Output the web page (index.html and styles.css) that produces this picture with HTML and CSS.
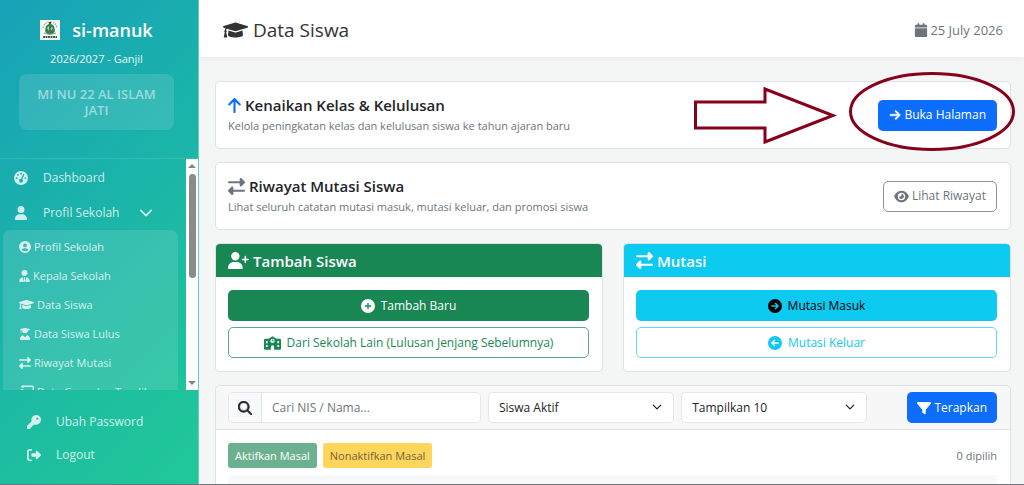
FILE: index.html
```html
<!DOCTYPE html>
<html lang="id">
<head>
<meta charset="utf-8">
<meta name="viewport" content="width=device-width, initial-scale=1">
<title>Data Siswa - si-manuk</title>
<link rel="stylesheet" href="styles.css">
</head>
<body>
<svg class="sprite" aria-hidden="true">
  <symbol id="cap" viewBox="0 0 640 512"><path d="M622.34 153.2L343.4 67.5c-15.2-4.67-31.6-4.67-46.79 0L17.66 153.2c-23.54 7.23-23.54 38.36 0 45.59l48.63 14.94c-10.67 13.19-17.23 29.28-17.88 46.9C38.78 266.15 32 276.11 32 288c0 10.78 5.68 19.85 13.86 25.65L20.33 428.53C18.11 438.52 25.71 448 35.94 448h56.11c10.24 0 17.84-9.48 15.62-19.47L82.14 313.65C90.32 307.85 96 298.78 96 288c0-11.57-6.47-21.25-15.66-26.87.76-15.02 8.44-28.3 20.69-36.72L296.6 284.5c9.06 2.78 26.44 6.25 46.79 0l278.95-85.7c23.55-7.24 23.55-38.36 0-45.6zM352.79 315.09c-28.53 8.76-52.84 3.92-65.59 0l-145.02-44.55L128 384c0 35.35 85.96 64 192 64s192-28.65 192-64l-14.18-113.47-145.03 44.56z"/></symbol>
  <symbol id="user" viewBox="0 0 448 512"><path d="M224 256A128 128 0 1 0 224 0a128 128 0 1 0 0 256zm-45.7 48C79.8 304 0 383.8 0 482.3C0 498.7 13.3 512 29.7 512H418.3c16.4 0 29.7-13.3 29.7-29.7C448 383.8 368.2 304 269.7 304H178.3z"/></symbol>
  <symbol id="tie" viewBox="0 0 448 512"><path d="M224 256A128 128 0 1 0 224 0a128 128 0 1 0 0 256zM144 309C62 324 0 396 0 482.300C0 498.700 13.300 512 29.700 512H190L144 309zM304 309L258 512H418.300c16.400 0 29.700-13.300 29.700-29.700C448 396 386 324 304 309zM188 300h72l-18 50 24 100-42 62-42-62 24-100z"/></symbol>
  <symbol id="grad" viewBox="0 0 448 512"><path d="M224 0L20 42v36l24 9v62l-20 54h56l-18-54V94l42 10v40a128 128 0 0 0 240 0v-40l84-22V42zM136 304C60 318 0 392 0 482c0 17 13 30 30 30h388c17 0 30-13 30-30 0-90-60-164-136-178l-88 92z"/></symbol>
  <symbol id="userplus" viewBox="0 0 640 512"><path d="M96 128a128 128 0 1 1 256 0A128 128 0 1 1 96 128zM0 482.3C0 383.8 79.8 304 178.3 304h91.4C368.2 304 448 383.8 448 482.3c0 16.4-13.3 29.7-29.7 29.7H29.7C13.3 512 0 498.7 0 482.3zM504 312V248H440c-13.3 0-24-10.7-24-24s10.7-24 24-24h64V136c0-13.3 10.7-24 24-24s24 10.7 24 24v64h64c13.3 0 24 10.7 24 24s-10.7 24-24 24H552v64c0 13.3-10.7 24-24 24s-24-10.7-24-24z"/></symbol>
  <symbol id="key" viewBox="0 0 512 512"><path d="M336 352c97.2 0 176-78.8 176-176S433.2 0 336 0S160 78.8 160 176c0 18.7 2.9 36.8 8.300 53.700L7 391c-4.500 4.500-7 10.600-7 17v80c0 13.300 10.700 24 24 24h80c13.300 0 24-10.700 24-24V448h40c13.300 0 24-10.700 24-24V384h40c6.400 0 12.500-2.500 17-7l33.300-33.300c16.900 5.400 35 8.300 53.700 8.300zM376 96a40 40 0 1 1 0 80 40 40 0 1 1 0-80z"/></symbol>
  <symbol id="filter" viewBox="0 0 512 512"><path d="M3.9 54.9C10.5 40.9 24.5 32 40 32H472c15.500 0 29.500 8.900 36.100 22.900s4.600 30.500-5.200 42.500L320 320.900V448c0 12.100-6.800 23.200-17.700 28.600s-23.800 4.300-33.500-3l-64-48c-8.100-6-12.800-15.500-12.800-25.600V320.900L9 97.300C-.7 85.400-2.800 68.800 3.900 54.900z"/></symbol>
  <symbol id="search" viewBox="0 0 512 512"><path stroke="currentColor" stroke-width="16" d="M416 208c0 45.9-14.9 88.3-40 122.7L502.6 457.4c12.5 12.5 12.5 32.8 0 45.3s-32.8 12.5-45.3 0L330.7 376c-34.4 25.2-76.8 40-122.7 40C93.1 416 0 322.9 0 208S93.1 0 208 0S416 93.1 416 208zM208 352a144 144 0 1 0 0-288 144 144 0 1 0 0 288z"/></symbol>
  <symbol id="right" viewBox="0 0 448 512"><path stroke="currentColor" stroke-width="20" d="M438.6 278.6c12.5-12.5 12.5-32.8 0-45.3l-160-160c-12.5-12.5-32.8-12.5-45.3 0s-12.5 32.8 0 45.3L338.8 224 32 224c-17.7 0-32 14.3-32 32s14.3 32 32 32l306.7 0L233.4 393.4c-12.5 12.5-12.5 32.8 0 45.3s32.8 12.5 45.3 0l160-160z"/></symbol>
  <symbol id="up" viewBox="0 0 384 512"><path d="M214.6 41.4c-12.5-12.5-32.8-12.5-45.3 0l-160 160c-12.5 12.5-12.5 32.8 0 45.3s32.8 12.5 45.3 0L160 141.2V448c0 17.7 14.3 32 32 32s32-14.3 32-32V141.2L329.4 246.6c12.5 12.5 32.8 12.5 45.3 0s12.5-32.8 0-45.3l-160-160z"/></symbol>
  <symbol id="swap" viewBox="0 0 512 512"><path d="M32 96l320 0V32c0-12.9 7.8-24.6 19.8-29.6s25.7-2.2 34.9 6.900l96 96c6 6 9.400 14.100 9.400 22.600s-3.400 16.600-9.400 22.600l-96 96c-9.200 9.200-22.900 11.900-34.900 6.900s-19.800-16.600-19.800-29.600V160L32 160c-17.700 0-32-14.300-32-32s14.300-32 32-32zM480 352c17.700 0 32 14.300 32 32s-14.300 32-32 32H160v64c0 12.900-7.800 24.600-19.800 29.600s-25.700 2.200-34.900-6.900l-96-96c-6-6-9.400-14.100-9.400-22.600s3.400-16.600 9.400-22.600l96-96c9.200-9.200 22.900-11.900 34.900-6.900s19.800 16.600 19.800 29.600l0 64H480z"/></symbol>
  <symbol id="eye" viewBox="0 0 576 512"><path d="M288 32c-80.8 0-145.5 36.8-192.6 80.6C48.6 156 17.3 208 2.5 243.7c-3.3 7.9-3.3 16.7 0 24.6C17.3 304 48.6 356 95.4 399.4C142.5 443.2 207.2 480 288 480s145.5-36.8 192.6-80.6c46.8-43.5 78.1-95.4 93-131.1c3.3-7.9 3.3-16.7 0-24.6c-14.9-35.7-46.2-87.7-93-131.1C433.5 68.8 368.8 32 288 32zM144 256a144 144 0 1 1 288 0 144 144 0 1 1 -288 0zm144-64c0 35.3-28.7 64-64 64c-7.1 0-13.9-1.2-20.3-3.3c-5.5-1.8-11.9 1.6-11.7 7.4c.3 6.9 1.3 13.8 3.2 20.7c13.7 51.2 66.4 81.6 117.6 67.9s81.6-66.4 67.9-117.6c-11.1-41.5-47.8-69.4-88.6-71.1c-5.8-.2-9.2 6.1-7.4 11.7c2.1 6.4 3.3 13.2 3.3 20.3z"/></symbol>
  <symbol id="out" viewBox="0 0 512 512"><path d="M377.9 105.9L500.7 228.7c7.2 7.2 11.3 17.1 11.3 27.3s-4.1 20.1-11.3 27.3L377.9 406.1c-6.4 6.4-15 9.9-24 9.9c-18.7 0-33.9-15.2-33.9-33.9l0-62.1-128 0c-17.7 0-32-14.3-32-32l0-64c0-17.7 14.3-32 32-32l128 0 0-62.1c0-18.7 15.2-33.9 33.9-33.9c9 0 17.6 3.6 24 9.9zM160 96L96 96c-17.7 0-32 14.3-32 32l0 256c0 17.7 14.3 32 32 32l64 0c17.7 0 32 14.3 32 32s-14.3 32-32 32l-64 0c-53 0-96-43-96-96L0 128C0 75 43 32 96 32l64 0c17.7 0 32 14.3 32 32s-14.3 32-32 32z"/></symbol>
  <symbol id="calendar" viewBox="0 0 448 512"><path d="M96 32V64H48C21.5 64 0 85.5 0 112v48H448V112c0-26.5-21.5-48-48-48H352V32c0-17.7-14.3-32-32-32s-32 14.3-32 32V64H160V32c0-17.7-14.3-32-32-32S96 14.3 96 32zM448 192H0V464c0 26.5 21.5 48 48 48H400c26.5 0 48-21.5 48-48V192z"/></symbol>
  <symbol id="plus" viewBox="0 0 512 512"><path fill-rule="evenodd" d="M256 0a256 256 0 1 0 0 512 256 256 0 1 0 0-512zM232 144h48v88h88v48h-88v88h-48v-88h-88v-48h88z"/></symbol>
  <symbol id="cright" viewBox="0 0 512 512"><path fill-rule="evenodd" d="M256 0a256 256 0 1 0 0 512 256 256 0 1 0 0-512zM280 130L406 256 280 382l-38-38 60-60H120v-56h182l-60-60z"/></symbol>
  <symbol id="cleft" viewBox="0 0 512 512"><path fill-rule="evenodd" d="M256 0a256 256 0 1 0 0 512 256 256 0 1 0 0-512zM232 130L106 256l126 126 38-38-60-60h182v-56H210l60-60z"/></symbol>
  <symbol id="cuser" viewBox="0 0 512 512"><path fill-rule="evenodd" d="M256 0a256 256 0 1 0 0 512 256 256 0 1 0 0-512zM256 105a82 82 0 1 1 0 164 82 82 0 1 1 0-164zM218 305h76c50 0 88 32 98 76a184 184 0 0 1-272 0c10-44 48-76 98-76z"/></symbol>
  <symbol id="gauge" viewBox="0 0 512 512"><path fill-rule="evenodd" d="M256 0a256 256 0 1 0 0 512 256 256 0 1 0 0-512zM256 64a32 32 0 1 1 0 64 32 32 0 1 1 0-64zM144 112a32 32 0 1 1 0 64 32 32 0 1 1 0-64zM96 224a32 32 0 1 1 0 64 32 32 0 1 1 0-64zM416 224a32 32 0 1 1 0 64 32 32 0 1 1 0-64zM340 106l42 20-80 180a66 66 0 1 1-44-18z"/></symbol>
  <symbol id="school" viewBox="0 0 640 512"><path fill-rule="evenodd" d="M320 0L474 96H592q48 0 48 48V464q0 48-48 48H380V400q0-60-60-60t-60 60V512H48q-48 0-48-48V144q0-48 48-48H166zM320 96a80 80 0 1 0 0 160 80 80 0 1 0 0-160zM304 120h32v40h28v30h-60zM72 184h64v80H72zM504 184h64v80h-64zM72 328h64v80H72zM504 328h64v80h-64z"/></symbol>
  <symbol id="board" viewBox="0 0 640 512"><path d="M128 0h448q64 0 64 64v288q0 64-64 64H400v-64h176V64H192v40q-36-30-96-20V64Q96 0 128 0zM128 144a80 80 0 1 1 0 160 80 80 0 1 1 0-160zM0 512q0-160 128-160t128 160z"/></symbol>
  <symbol id="down" viewBox="0 0 16 16"><path d="M2 5l6 6 6-6" fill="none" stroke="currentColor" stroke-width="2" stroke-linecap="round" stroke-linejoin="round"/></symbol>
</svg>

<div class="app">
  <aside class="sidebar">
    <header class="brand">
      <div class="brand-row">
        <svg class="logo" viewBox="0 0 20 20" role="img" aria-label="Logo">
          <rect width="20" height="20" fill="#f6f8f5"/>
          <path d="M3 8Q4 2.500 10 2Q16 2.500 17 8" fill="none" stroke="#9fb5a5" stroke-width="1.500" stroke-dasharray="1.500 1"/>
          <path d="M6 6l4-3 4 3 1 5-2 3H7l-2-3z" fill="#3d7d4c"/>
          <path d="M7 8l2-2v5zM11 7l2 1-2 3z" fill="#b9d2bd"/>
          <path d="M9 2h2v2H9z" fill="#245c34"/>
          <path d="M4 13q6 3 12 0" fill="none" stroke="#7fa287"/>
          <path d="M3 17h14" stroke="#40684b" stroke-width="2" stroke-dasharray="2 .5"/>
        </svg>
        <span class="brand-name">si-manuk</span>
      </div>
      <div class="term">2026/2027 - Ganjil</div>
      <div class="school-name">MI NU 22 AL ISLAM JATI</div>
    </header>
    <div class="menu-wrap">
      <nav class="menu">
        <a class="menu-link" href="#"><svg class="icon i14"><use href="#gauge"/></svg><span>Dashboard</span></a>
        <a class="menu-link" href="#"><svg class="icon i14"><use href="#user"/></svg><span>Profil Sekolah</span><svg class="icon chev"><use href="#down"/></svg></a>
        <div class="submenu">
          <a class="sub-link" href="#"><svg class="icon i12"><use href="#cuser"/></svg>Profil Sekolah</a>
          <a class="sub-link" href="#"><svg class="icon w11"><use href="#tie"/></svg>Kepala Sekolah</a>
          <a class="sub-link" href="#"><svg class="icon w15"><use href="#cap"/></svg>Data Siswa</a>
          <a class="sub-link" href="#"><svg class="icon i12"><use href="#grad"/></svg>Data Siswa Lulus</a>
          <a class="sub-link" href="#"><svg class="icon i12"><use href="#swap"/></svg>Riwayat Mutasi</a>
          <a class="sub-link" href="#"><svg class="icon w15"><use href="#board"/></svg>Data Guru dan Tendik</a>
        </div>
      </nav>
      <div class="scrollbar" aria-hidden="true">
        <svg class="tick" viewBox="0 0 8 4"><path d="M0 4l4-4 4 4z"/></svg>
        <div class="track"><div class="thumb"></div></div>
        <svg class="tick" viewBox="0 0 8 4"><path d="M0 0l4 4 4-4z"/></svg>
      </div>
    </div>
    <nav class="account">
      <a class="account-link" href="#"><svg class="icon i14"><use href="#key"/></svg>Ubah Password</a>
      <a class="account-link" href="#"><svg class="icon i14"><use href="#out"/></svg>Logout</a>
    </nav>
  </aside>

  <div class="page">
    <header class="topbar">
      <h1 class="title"><svg class="icon w25"><use href="#cap"/></svg>Data Siswa</h1>
      <div class="date"><svg class="icon i14"><use href="#calendar"/></svg>25 July 2026</div>
    </header>
    <main class="content">
      <section class="card banner">
        <div>
          <h2 class="heading"><svg class="icon up"><use href="#up"/></svg>Kenaikan Kelas &amp; Kelulusan</h2>
          <p class="note">Kelola peningkatan kelas dan kelulusan siswa ke tahun ajaran baru</p>
        </div>
        <button class="btn primary" type="button"><svg class="icon i12"><use href="#right"/></svg>Buka Halaman</button>
        <svg class="marker" viewBox="0 0 330 84" aria-hidden="true">
          <path d="M5.500 32H75V19L143 45.500 75 72V58H5.500z"/>
          <ellipse cx="242" cy="41.500" rx="81.500" ry="38"/>
        </svg>
      </section>
      <section class="card banner">
        <div>
          <h2 class="heading"><svg class="icon i16 muted"><use href="#swap"/></svg>Riwayat Mutasi Siswa</h2>
          <p class="note">Lihat seluruh catatan mutasi masuk, mutasi keluar, dan promosi siswa</p>
        </div>
        <button class="btn outline-gray" type="button"><svg class="icon w15"><use href="#eye"/></svg>Lihat Riwayat</button>
      </section>
      <div class="pair">
        <section class="card">
          <h2 class="card-head green"><svg class="icon w21"><use href="#userplus"/></svg>Tambah Siswa</h2>
          <div class="stack">
            <button class="btn wide green" type="button"><svg class="icon i14"><use href="#plus"/></svg>Tambah Baru</button>
            <button class="btn wide outline-green" type="button"><svg class="icon w17"><use href="#school"/></svg>Dari Sekolah Lain (Lulusan Jenjang Sebelumnya)</button>
          </div>
        </section>
        <section class="card">
          <h2 class="card-head cyan"><svg class="icon i16"><use href="#swap"/></svg>Mutasi</h2>
          <div class="stack">
            <button class="btn wide cyan dark" type="button"><svg class="icon i14"><use href="#cright"/></svg>Mutasi Masuk</button>
            <button class="btn wide outline-cyan" type="button"><svg class="icon i14"><use href="#cleft"/></svg>Mutasi Keluar</button>
          </div>
        </section>
      </div>
      <section class="card list">
        <form class="filters">
          <div class="search">
            <label class="search-icon" for="q" aria-label="Cari"><svg class="icon i14"><use href="#search"/></svg></label>
            <input class="search-input" id="q" type="text" placeholder="Cari NIS / Nama...">
          </div>
          <div class="picker"><select class="select" aria-label="Status"><option>Siswa Aktif</option></select><svg class="icon caret"><use href="#down"/></svg></div>
          <div class="picker"><select class="select" aria-label="Jumlah"><option>Tampilkan 10</option></select><svg class="icon caret"><use href="#down"/></svg></div>
          <button class="btn primary apply" type="button"><svg class="icon i14"><use href="#filter"/></svg>Terapkan</button>
        </form>
        <div class="bulk">
          <button class="btn-sm soft-green" type="button">Aktifkan Masal</button>
          <button class="btn-sm soft-yellow" type="button">Nonaktifkan Masal</button>
          <span class="count">0 dipilih</span>
        </div>
        <div class="table-head"></div>
      </section>
    </main>
  </div>
</div>
</body>
</html>
```
FILE: styles.css
```css
* { box-sizing: border-box; }
body {
  margin: 0;
  background: #f4f6f6;
  color: #212529;
  font: 12px/20px "Open Sans", "Noto Sans", sans-serif;
}
h1, h2, p { margin: 0; }
a { color: inherit; text-decoration: none; }
button, input, select { font: inherit; color: inherit; margin: 0; }
.sprite { position: absolute; width: 0; height: 0; }
.icon { fill: currentColor; flex: none; width: 14px; height: 14px; }
.i12 { width: 12px; height: 12px; }
.i14 { width: 14px; height: 14px; }
.i16 { width: 17px; height: 17px; }
.w11 { width: 11px; height: 12px; }
.w15 { width: 15px; height: 13px; }
.w17 { width: 17px; height: 14px; }
.w21 { width: 21px; height: 17px; }
.w25 { width: 25px; height: 20px; }
.up { width: 13px; height: 17px; color: #0d6efd; }
.muted { color: #6c757d; }

.app { display: flex; height: 100vh; overflow: hidden; border-bottom: 1px solid #6b7780; }
.sidebar {
  display: flex;
  flex-direction: column;
  flex: none;
  width: 199px;
  border-right: 1px solid #63cfc0;
  background: linear-gradient(135deg, #17a2b8, #20c997);
  color: rgba(255, 255, 255, .8);
}
.brand {
  flex: none;
  height: 159px;
  padding: 16px 24px 0 19px;
  border-bottom: 1px solid rgba(255, 255, 255, .12);
  text-align: center;
}
.brand-row { display: flex; align-items: center; justify-content: center; gap: 12px; height: 27px; }
.logo { width: 20px; height: 20px; }
.brand-name { color: #fff; font-size: 18px; font-weight: 600; }
.term { margin-top: 6px; color: #e8f7f6; font-size: 11px; }
.school-name {
  margin-top: 5px;
  padding: 12px 16px;
  border-radius: 8px;
  background: rgba(255, 255, 255, .12);
  color: rgba(255, 255, 255, .5);
  font-size: 13px;
  font-weight: 600;
  line-height: 16px;
}
.menu-wrap { display: flex; flex: 1; min-height: 0; }
.menu { flex: 1; min-width: 0; padding-top: 1px; overflow: hidden; }
.menu-link { display: flex; align-items: center; height: 35px; padding-left: 14px; gap: 15px; }
.chev { margin-left: 5px; }
.submenu { margin: 0 8px 0 3px; padding: 2px 0 0 16px; border-radius: 8px; background: rgba(255, 255, 255, .12); }
.sub-link { display: flex; align-items: center; gap: 3px; height: 29px; font-size: 11px; white-space: nowrap; }
.scrollbar { display: flex; flex-direction: column; align-items: center; width: 12px; padding: 5px 0; background: #fcfcfc; }
.tick { width: 8px; height: 4px; fill: #858585; }
.track { flex: 1; padding-top: 6px; }
.thumb { width: 7px; height: 50%; border-radius: 4px; background: #8b8b8b; }
.account { flex: none; padding: 15px 0 13px; }
.account-link { display: flex; align-items: center; gap: 15px; height: 33px; padding-left: 27px; }

.page { flex: 1; min-width: 0; }
.topbar {
  display: flex;
  align-items: center;
  justify-content: space-between;
  height: 57px;
  padding: 2px 21px 0 24px;
  background: #fff;
  box-shadow: 0 2px 4px rgba(0, 0, 0, .04);
}
.title { display: flex; align-items: center; gap: 5px; color: #333; font-size: 19px; font-weight: 500; }
.date { display: flex; align-items: center; gap: 2px; color: #6c757d; font-size: 13px; }
.content { padding: 24px 13px 0 16px; }
.card { border: 1px solid #dee0e1; border-radius: 5px; background: #fff; }
.banner {
  position: relative;
  display: flex;
  align-items: center;
  justify-content: space-between;
  height: 68px;
  margin-bottom: 13px;
  padding: 0 13px 0 12px;
}
.heading { display: flex; align-items: center; gap: 4px; font-size: 15px; font-weight: 600; line-height: 22px; }
.note { color: #6c757d; font-size: 11px; }
.marker {
  position: absolute;
  top: -12px;
  right: -10px;
  width: 330px;
  height: 84px;
  fill: none;
  stroke: #86001b;
  stroke-width: 3;
  pointer-events: none;
}
.btn {
  display: flex;
  align-items: center;
  justify-content: center;
  gap: 3px;
  height: 31px;
  padding: 0 10px;
  border: 1px solid transparent;
  border-radius: 5px;
  background: #fff;
  white-space: nowrap;
}
.primary { background: #0d6efd; color: #fff; }
.outline-gray { border-color: #8d949a; color: #6c757d; }
.pair { display: grid; grid-template-columns: 1fr 1fr; gap: 20px; margin-bottom: 13px; }
.card-head { display: flex; align-items: center; gap: 4px; height: 33px; padding: 0 12px; border-radius: 4px 4px 0 0; font-size: 15px; font-weight: 600; }
.green { background: #198754; color: #fff; }
.cyan { background: #0dcaf0; color: #fff; }
.dark { color: #000; }
.outline-green { border-color: #5cab85; color: #198754; }
.outline-cyan { border-color: #5fdcf5; color: #0dcaf0; }
.stack { display: grid; gap: 6px; padding: 13px 13px 13px 12px; }
.wide { gap: 6px; }

.filters { display: flex; gap: 7px; padding: 6px 13px 6px 12px; border-bottom: 1px solid #dee0e1; border-radius: 5px 5px 0 0; background: #f7f7f7; }
.search { display: flex; flex: 252; min-width: 0; height: 31px; border: 1px solid #e4e7ea; border-radius: 5px; background: #fff; overflow: hidden; }
.search-icon { display: grid; place-items: center; width: 33px; border-right: 1px solid #e4e7ea; background: #f8f9fa; }
.search-input { flex: 1; min-width: 0; padding: 0 10px; border: 0; background: #fff; outline: 0; }
.search-input::placeholder { color: #6c757d; opacity: 1; }
.picker { position: relative; flex: 187; min-width: 0; }
.select { width: 100%; height: 31px; padding: 0 10px; border: 1px solid #e4e7ea; border-radius: 5px; background: #fff; appearance: none; }
.caret { position: absolute; top: 10px; right: 12px; width: 10px; height: 10px; pointer-events: none; }
.apply { margin-left: 33px; padding: 0 9px; }
.bulk { display: flex; align-items: center; gap: 6px; padding: 13px 13px 7px 12px; }
.btn-sm { height: 25px; padding: 0 7px; border: 0; border-radius: 3px; font-size: 11px; }
.soft-green { background: #6bb190; color: #fff; }
.soft-yellow { background: #ffd65b; color: #6f653f; }
.count { margin-left: auto; color: #6c757d; font-size: 11px; }
.table-head { height: 32px; margin: 0 13px 0 12px; background: #f8f9fa; }
```
